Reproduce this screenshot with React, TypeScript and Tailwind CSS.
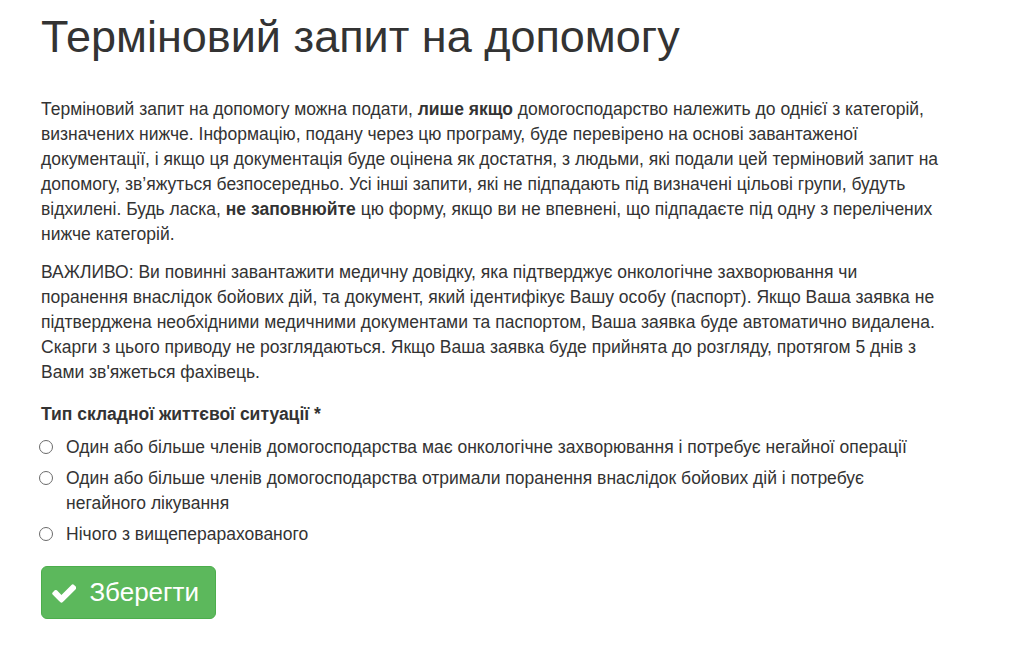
const options = [
  "Один або більше членів домогосподарства має онкологічне захворювання і потребує негайної операції",
  "Один або більше членів домогосподарства отримали поранення внаслідок бойових дій і потребує негайного лікування",
  "Нічого з вищеперарахованого",
];

function CheckIcon() {
  // Font Awesome 4 style check glyph
  return (
    <svg viewBox="109 362 1562 1064" className="h-[20px] w-[27px]" fill="currentColor">
      <path d="M1671 566q0 40-28 68l-724 724-136 136q-28 28-68 28t-68-28l-136-136-362-362q-28-28-28-68t28-68l136-136q28-28 68-28t68 28l294 295 656-657q28-28 68-28t68 28l136 136q28 28 28 68z" />
    </svg>
  );
}

export default function App() {
  return (
    <div className="min-h-screen bg-white font-['Liberation_Sans',Arial,sans-serif] text-[#333]">
      <div className="w-[900px] ml-[41px] pb-10">
        {/* Heading */}
        <h1 className="mt-[12px] mb-[35.5px] text-[45px] leading-[49.5px] font-normal">
          Терміновий запит на допомогу
        </h1>

        {/* Intro */}
        <p className="text-[17.5px] leading-[25px] mb-[12.5px]">
          Терміновий запит на допомогу можна подати, <b>лише якщо</b> домогосподарство належить до однієї з
          категорій, визначених нижче. Інформацію, подану через цю програму, буде перевірено на основі
          завантаженої документації, і якщо ця документація буде оцінена як достатня, з людьми, які подали цей
          терміновий запит на допомогу, зв’яжуться безпосередньо. Усі інші запити, які не підпадають під
          визначені цільові групи, будуть відхилені. Будь ласка, <b>не заповнюйте</b> цю форму, якщо ви не
          впевнені, що підпадаєте під одну з перелічених нижче категорій.
        </p>
        <p className="text-[17.5px] leading-[25px] mb-[17.5px]">
          ВАЖЛИВО: Ви повинні завантажити медичну довідку, яка підтверджує онкологічне захворювання чи поранення
          внаслідок бойових дій, та документ, який ідентифікує Вашу особу (паспорт). Якщо Ваша заявка не
          підтверджена необхідними медичними документами та паспортом, Ваша заявка буде автоматично видалена.
          Скарги з цього приводу не розглядаються. Якщо Ваша заявка буде прийнята до розгляду, протягом 5 днів
          з Вами зв'яжеться фахівець.
        </p>

        {/* Form */}
        <div className="text-[17.5px] leading-[25px] font-bold mb-[7.5px]">Тип складної життєвої ситуації *</div>
        <div className="flex flex-col gap-[6px]">
          {options.map((o) => (
            <label key={o} className="flex items-start text-[17.5px] leading-[25px]">
              <span className="mt-[5.5px] ml-[-2px] w-[14px] h-[14px] shrink-0 rounded-full border border-[#6b6b6b] bg-white" />
              <span className="ml-[13px]">{o}</span>
            </label>
          ))}
        </div>

        <button className="mt-[19.5px] flex h-[53px] w-[175px] items-center gap-[13px] rounded-[6px] border border-[#4cae4c] bg-[#5cb85c] pl-[10px] pr-[16px] text-[26px] text-white">
          <CheckIcon />
          <span>Зберегти</span>
        </button>
      </div>
    </div>
  );
}
